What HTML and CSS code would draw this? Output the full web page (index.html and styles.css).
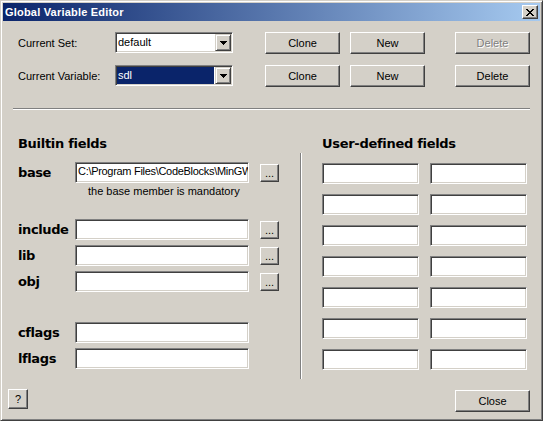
FILE: index.html
```html
<!DOCTYPE html>
<html>
<head>
<meta charset="utf-8">
<title>Global Variable Editor</title>
<link rel="stylesheet" href="styles.css">
</head>
<body>
<div class="window">
  <div class="titlebar">
    <span class="title">Global Variable Editor</span>
    <button class="tb-close" aria-label="Close">
      <svg width="8" height="7" viewBox="0 0 8 7" shape-rendering="crispEdges">
        <rect x="0" y="0" width="2" height="1"/><rect x="6" y="0" width="2" height="1"/>
        <rect x="1" y="1" width="2" height="1"/><rect x="5" y="1" width="2" height="1"/>
        <rect x="2" y="2" width="4" height="1"/>
        <rect x="3" y="3" width="2" height="1"/>
        <rect x="2" y="4" width="4" height="1"/>
        <rect x="1" y="5" width="2" height="1"/><rect x="5" y="5" width="2" height="1"/>
        <rect x="0" y="6" width="2" height="1"/><rect x="6" y="6" width="2" height="1"/>
      </svg>
    </button>
  </div>

  <div class="content">
    <div class="top">
      <span class="lbl">Current Set:</span>
      <div class="combo">
        <span class="combo-text">default</span>
        <span class="combo-btn"><svg width="7" height="4" viewBox="0 0 7 4" shape-rendering="crispEdges"><rect x="0" y="0" width="7" height="1"/><rect x="1" y="1" width="5" height="1"/><rect x="2" y="2" width="3" height="1"/><rect x="3" y="3" width="1" height="1"/></svg></span>
      </div>
      <button class="btn">Clone</button>
      <button class="btn">New</button>
      <button class="btn disabled">Delete</button>

      <span class="lbl">Current Variable:</span>
      <div class="combo">
        <span class="combo-text selected">sdl</span>
        <span class="combo-btn"><svg width="7" height="4" viewBox="0 0 7 4" shape-rendering="crispEdges"><rect x="0" y="0" width="7" height="1"/><rect x="1" y="1" width="5" height="1"/><rect x="2" y="2" width="3" height="1"/><rect x="3" y="3" width="1" height="1"/></svg></span>
      </div>
      <button class="btn">Clone</button>
      <button class="btn">New</button>
      <button class="btn">Delete</button>
    </div>

    <div class="hsep"></div>

    <div class="lower">
      <div class="builtin">
        <h2 class="heading">Builtin fields</h2>
        <div class="frow first">
          <span class="flabel">base</span>
          <div class="edit path">C:\Program Files\CodeBlocks\MinGW</div>
          <button class="dots">...</button>
        </div>
        <div class="note">the base member is mandatory</div>
        <div class="frow gap-big">
          <span class="flabel">include</span>
          <div class="edit"></div>
          <button class="dots">...</button>
        </div>
        <div class="frow">
          <span class="flabel">lib</span>
          <div class="edit"></div>
          <button class="dots">...</button>
        </div>
        <div class="frow">
          <span class="flabel">obj</span>
          <div class="edit"></div>
          <button class="dots">...</button>
        </div>
        <div class="frow gap-flags">
          <span class="flabel">cflags</span>
          <div class="edit"></div>
        </div>
        <div class="frow">
          <span class="flabel">lflags</span>
          <div class="edit"></div>
        </div>
      </div>

      <div class="vsep"></div>

      <div class="user">
        <h2 class="heading">User-defined fields</h2>
        <div class="ugrid">
          <div class="edit"></div><div class="edit"></div>
          <div class="edit"></div><div class="edit"></div>
          <div class="edit"></div><div class="edit"></div>
          <div class="edit"></div><div class="edit"></div>
          <div class="edit"></div><div class="edit"></div>
          <div class="edit"></div><div class="edit"></div>
          <div class="edit"></div><div class="edit"></div>
        </div>
      </div>
    </div>

    <div class="bottom">
      <button class="btn help">?</button>
      <button class="btn close">Close</button>
    </div>
  </div>
</div>
</body>
</html>
```

FILE: styles.css
```css
* {
  box-sizing: border-box;
}

html,
body {
  margin: 0;
  padding: 0;
}

body {
  width: 543px;
  height: 421px;
  overflow: hidden;
  background: #d4d0c8;
  font-family: "Liberation Sans", Arial, sans-serif;
  font-size: 11px;
  color: #000;
}

.window {
  width: 543px;
  height: 421px;
  display: flex;
  flex-direction: column;
  padding: 2px;
  background: #d4d0c8;
  border: 1px solid;
  border-color: #d4d0c8 #404040 #404040 #d4d0c8;
  box-shadow: inset 1px 1px #fff, inset -1px -1px #808080;
}

/* ---------- title bar ---------- */
.titlebar {
  height: 18px;
  display: flex;
  align-items: center;
  justify-content: space-between;
  padding: 0 2px 0 2px;
  background: linear-gradient(to right, #0a246a, #a6caf0);
}

.title {
  color: #fff;
  font-weight: bold;
  font-size: 11px;
  line-height: 13px;
  letter-spacing: 0.2px;
}

.tb-close {
  width: 16px;
  height: 14px;
  margin: 0;
  padding: 0;
  display: flex;
  align-items: center;
  justify-content: center;
  background: #d4d0c8;
  border: 1px solid;
  border-color: #fff #404040 #404040 #fff;
  box-shadow: inset -1px -1px #808080;
}

.tb-close svg {
  fill: #000;
  display: block;
}

/* ---------- common controls ---------- */
button {
  font-family: "Liberation Sans", Arial, sans-serif;
  font-size: 11px;
  color: #000;
  margin: 0;
  padding: 0;
  background: #d4d0c8;
  border-radius: 0;
}

.btn {
  width: 75px;
  height: 22px;
  border: 1px solid;
  border-color: #fff #404040 #404040 #fff;
  box-shadow: inset -1px -1px #808080;
  line-height: 13px;
}

.btn.disabled {
  color: #808080;
  text-shadow: 1px 1px 0 #fff;
}

.edit {
  height: 21px;
  background: #fff;
  border: 1px solid;
  border-color: #808080 #fff #fff #808080;
  box-shadow: inset 1px 1px #404040, inset -1px -1px #d4d0c8;
  padding: 0 2px 0 2px;
  line-height: 17px;
  white-space: nowrap;
  overflow: hidden;
}

.edit.path {
  letter-spacing: -0.3px;
}

/* ---------- top section ---------- */
.content {
  flex: 1;
  display: flex;
  flex-direction: column;
}

.top {
  display: grid;
  grid-template-columns: 97px 150px 85px 105px 75px;
  grid-auto-rows: 22px;
  row-gap: 11px;
  align-items: center;
  margin: 11px 0 0 15px;
}

.lbl {
  line-height: 13px;
}

.combo {
  width: 118px;
  height: 21px;
  align-self: start;
  display: flex;
  padding: 1px;
  background: #fff;
  border: 1px solid;
  border-color: #808080 #fff #fff #808080;
  box-shadow: inset 1px 1px #404040, inset -1px -1px #d4d0c8;
}

.combo-text {
  flex: 1;
  line-height: 17px;
  padding-left: 1px;
  margin-right: 1px;
}

.combo-text.selected {
  background: #0a246a;
  color: #fff;
}

.combo-btn {
  width: 16px;
  height: 17px;
  display: flex;
  align-items: center;
  justify-content: center;
  background: #d4d0c8;
  border: 1px solid;
  border-color: #d4d0c8 #404040 #404040 #d4d0c8;
  box-shadow: inset 1px 1px #fff, inset -1px -1px #808080;
}

.combo-btn svg {
  display: block;
  fill: #000;
}

.hsep {
  height: 2px;
  margin: 21px 10px 0 10px;
  border-top: 1px solid #808080;
  border-bottom: 1px solid #fff;
}

/* ---------- lower section ---------- */
.lower {
  display: flex;
  align-items: flex-start;
  padding-left: 15px;
  margin-top: 26px;
}

.heading {
  margin: 0;
  height: 16px;
  font-family: "DejaVu Sans", Verdana, sans-serif;
  font-weight: bold;
  font-size: 13px;
  line-height: 16px;
  letter-spacing: -0.3px;
}

.builtin {
  width: 282px;
  display: flex;
  flex-direction: column;
}

.frow {
  display: flex;
  align-items: center;
  height: 21px;
  margin-top: 5px;
}

.frow.first {
  margin-top: 10px;
}

.frow.gap-big {
  margin-top: 21px;
}

.frow.gap-flags {
  margin-top: 30px;
}

.flabel {
  width: 57px;
  font-family: "DejaVu Sans", Verdana, sans-serif;
  font-weight: bold;
  font-size: 13px;
  line-height: 16px;
  letter-spacing: -0.4px;
  padding-top: 1px;
}

.frow .edit {
  width: 174px;
}

.dots {
  width: 19px;
  height: 18px;
  margin-left: 11px;
  border: 1px solid;
  border-color: #fff #404040 #404040 #fff;
  box-shadow: inset -1px -1px #808080;
  line-height: 13px;
  padding-top: 2px;
}

.note {
  margin: 2px 0 0 70px;
  line-height: 13px;
}

.vsep {
  width: 2px;
  height: 226px;
  margin-top: 17px;
  border-left: 1px solid #808080;
  border-right: 1px solid #fff;
}

.user {
  margin-left: 20px;
  display: flex;
  flex-direction: column;
}

.ugrid {
  margin-top: 11px;
  display: grid;
  grid-template-columns: 97px 97px;
  grid-auto-rows: 21px;
  column-gap: 11px;
  row-gap: 10px;
}

/* ---------- bottom ---------- */
.bottom {
  display: flex;
  align-items: flex-start;
  justify-content: space-between;
  margin-top: 10px;
  padding: 0 10px 0 5px;
}

.btn.help {
  width: 20px;
  height: 20px;
}

.btn.close {
  margin-top: 1px;
}
```
